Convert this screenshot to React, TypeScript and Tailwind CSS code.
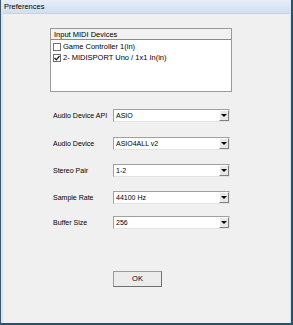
import React from 'react'

const rows = [
  { label: 'Audio Device API', value: 'ASIO', top: 'mt-[16px]' },
  { label: 'Audio Device', value: 'ASIO4ALL v2', top: 'mt-[14px]' },
  { label: 'Stereo Pair', value: '1-2', top: 'mt-[13px]' },
  { label: 'Sample Rate', value: '44100 Hz', top: 'mt-[13px]' },
  { label: 'Buffer Size', value: '256', top: 'mt-[11px]' },
]

function Combo({ value }: { value: string }) {
  return (
    <div className="flex h-[13px] w-[117px] border-t border-l border-t-[#a0a0a0] border-l-[#a0a0a0] border-b border-r border-b-[#e3e3e3] border-r-[#e3e3e3] bg-white">
      <div className="flex-1 pl-[2px] text-[7px] leading-[11px] text-black">{value}</div>
      <div className="flex h-[11px] w-[10px] items-center justify-center border-t border-l border-t-white border-l-white border-b border-r border-b-[#808080] border-r-[#808080] bg-[#e8e8e8]">
        <div className="h-0 w-0 border-l-[3px] border-r-[3px] border-t-[3px] border-l-transparent border-r-transparent border-t-black" />
      </div>
    </div>
  )
}

function Check({ checked }: { checked?: boolean }) {
  return (
    <div className="flex h-[8px] w-[8px] items-center justify-center border border-[#707070] bg-white">
      {checked && (
        <svg width="6" height="6" viewBox="0 0 6 6">
          <path d="M0.5 3 L2.3 4.8 L5.5 1" stroke="#222" strokeWidth="1.3" fill="none" />
        </svg>
      )}
    </div>
  )
}

export default function App() {
  return (
    <div className="flex h-[325px] w-[293px] flex-col border-l border-l-[#3e5a6b] border-r-2 border-r-[#1d5870] border-b-2 border-b-[#1d5870] bg-[#d6e2f0] font-['Liberation_Sans',Arial,sans-serif] text-black">
      <div className="h-[13px] bg-gradient-to-b from-[#e6eef8] to-[#d3dfee] pl-[3px] text-[7.5px] leading-[13px]">
        Preferences
      </div>
      <div className="ml-[2px] mr-[1px] flex flex-1 flex-col bg-[#f0f0f0] border-t border-t-[#c8d3df]">
        <div className="ml-[47px] mt-[14px] flex h-[64px] w-[182px] flex-col border border-[#9a9a9a] bg-white">
          <div className="h-[11px] border-b border-b-[#8a8a8a] bg-[#f2f2f2] pl-[3px] text-[7.5px] leading-[11px]">
            Input MIDI Devices
          </div>
          <div className="mt-[3px] flex flex-col gap-[3px] pl-[2px]">
            <div className="flex items-center gap-[2px] text-[7.5px] leading-[8px]">
              <Check />
              <span>Game Controller 1(in)</span>
            </div>
            <div className="flex items-center gap-[2px] text-[7.5px] leading-[8px]">
              <Check checked />
              <span>2- MIDISPORT Uno / 1x1 In(in)</span>
            </div>
          </div>
        </div>
        {rows.map(r => (
          <div key={r.label} className={`${r.top} ml-[50px] flex h-[14px] items-center`}>
            <div className="w-[60px] text-[7px] leading-[13px]">{r.label}</div>
            <Combo value={r.value} />
          </div>
        ))}
        <div className="ml-[110px] mt-[42px] flex h-[16px] w-[49px] items-center justify-center border border-[#9a9a9a] border-b-[#707070] border-r-[#707070] bg-[#ececec] text-[7.5px]">
          OK
        </div>
      </div>
    </div>
  )
}
